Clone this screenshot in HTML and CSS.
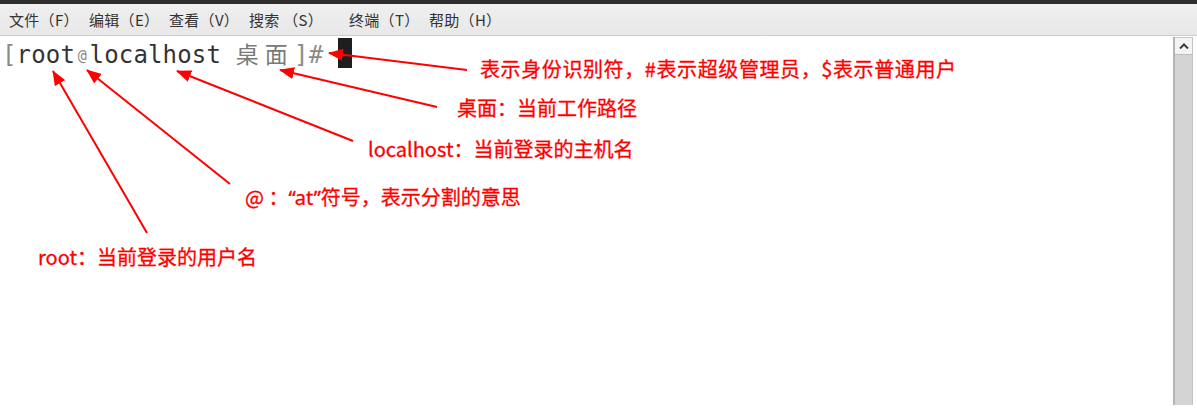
FILE: index.html
```html
<!DOCTYPE html>
<html lang="zh-CN">
<head>
  <meta charset="UTF-8" />
  <title>终端 - root@localhost</title>
  <link rel="stylesheet" href="styles.css">
</head>
<body>
  <div class="topbar"></div>

  <!-- menu -->
  <div class="menubar">
    <span class="menu-item">文件（F）</span>
    <span class="menu-item">编辑（E）</span>
    <span class="menu-item">查看（V）</span>
    <span class="menu-item wide">搜索 （S）</span>
    <span class="menu-item">终端（T）</span>
    <span class="menu-item">帮助（H）</span>
  </div>

  <div class="terminal">
    <div class="screen">
      <div class="prompt"><span class="dim">[</span><span class="strong">root</span><span class="at">@</span><span class="strong">localhost</span> <span class="cjk">桌面</span><span class="dim">]#</span> <span class="cursor"></span></div>
    </div>
    <div class="scrollbar">
      <div class="scroll-btn">
        <svg width="10" height="6" viewBox="0 0 10 6"><path d="M1 5.5 L5 1.5 L9 5.5" fill="none" stroke="#3c3c3c" stroke-width="2"/></svg>
      </div>
      <div class="scroll-trough"></div>
    </div>
  </div>

  <!-- annotations drawn over the screenshot -->
  <div class="notes">
    <svg class="arrows" width="1197" height="416" viewBox="0 0 1197 416">
      <defs>
        <marker id="head" markerUnits="userSpaceOnUse" markerWidth="16" markerHeight="12" refX="14" refY="6" orient="auto">
          <path d="M0 0 L15 6 L0 12 Z" fill="#f00"/>
        </marker>
      </defs>
      <g stroke="#f00" stroke-width="2" marker-end="url(#head)">
        <line x1="467" y1="70" x2="329" y2="53"/>
        <line x1="437" y1="107" x2="280" y2="70"/>
        <line x1="353" y1="141" x2="177" y2="71"/>
        <line x1="230" y1="184" x2="87" y2="70"/>
        <line x1="147" y1="233" x2="53" y2="71"/>
      </g>
    </svg>
    <div class="note n1">表示身份识别符，#表示超级管理员，$表示普通用户</div>
    <div class="note n2">桌面：当前工作路径</div>
    <div class="note n3">localhost：当前登录的主机名</div>
    <div class="note n4">@ ：<span class="latin">“at”</span>符号，表示分割的意思</div>
    <div class="note n5">root：当前登录的用户名</div>
  </div>
</body>
</html>
```

FILE: styles.css
```css
/* ===== Base ===== */
* {
  margin: 0;
  padding: 0;
  box-sizing: border-box;
}
html, body {
  width: 1197px;
  height: 416px;
  overflow: hidden;
  background: #fff;
  font-family: "Noto Sans CJK SC", "Noto Sans", sans-serif;
}
body {
  position: relative;
}

/* ===== Window chrome ===== */
.topbar {
  height: 4px;
  background: #2e2e2e;
}
.menubar {
  display: flex;
  align-items: center;
  height: 32px;
  padding-left: 9px;
  background: linear-gradient(#efefef, #e8e8e8);
  border-bottom: 1px solid #cdcdcd;
  font-size: 15px;
  color: #333;
}
.menu-item {
  width: 80px;
  white-space: nowrap;
  letter-spacing: 0.3px;
}
.menu-item.wide {
  width: 100px;
}

/* ===== Terminal ===== */
.terminal {
  display: flex;
  height: 380px;
}
.screen {
  flex: 1;
  padding: 2px 0 0 2px;
}
.prompt {
  height: 30px;
  line-height: 30px;
  font-family: "DejaVu Sans Mono", "Noto Sans CJK SC", monospace;
  font-size: 24px;
  letter-spacing: 0.15px;
  color: #333;
  white-space: pre;
}
.prompt .dim {
  color: #8a8a8a;
}
.prompt .at {
  display: inline-block;
  width: 14.6px;
  text-align: center;
  font-size: 15px;
  color: #8a8a8a;
  vertical-align: top;
  padding-top: 3px;
}
.prompt .cjk {
  font-family: "Noto Sans CJK SC", sans-serif;
  font-size: 23px;
  letter-spacing: 6.2px;
  color: #7a7a7a;
}
.cursor {
  display: inline-block;
  width: 14px;
  height: 30px;
  background: #1e1e1e;
  vertical-align: top;
}

/* ===== Scrollbar ===== */
.scrollbar {
  display: flex;
  flex-direction: column;
  width: 20px;
  margin: 1px 4px 11px 0;
  background: #d4d4d4;
  border-left: 2px solid #b4b4b4;
  border-right: 1px solid #c4c4c4;
}
.scroll-btn {
  display: flex;
  align-items: center;
  justify-content: center;
  height: 18px;
  background: #f4f4f4;
  border-top: 1px solid #c8c8c8;
  border-bottom: 1px solid #bdbdbd;
}
.scroll-trough {
  flex: 1;
}

/* ===== Annotations ===== */
.notes {
  position: absolute;
  top: 0;
  left: 0;
  width: 1197px;
  height: 416px;
  pointer-events: none;
}
.arrows {
  position: absolute;
  top: 0;
  left: 0;
}
.note {
  position: absolute;
  font-size: 20px;
  line-height: 20px;
  color: #f00;
  white-space: nowrap;
  -webkit-text-stroke: 0.3px #f00;
}
.note .latin {
  font-family: "Noto Sans", sans-serif;
}
.n1 { left: 480px; top: 59px; letter-spacing: 0.6px; }
.n2 { left: 457px; top: 98px; }
.n3 { left: 368px; top: 139px; }
.n4 { left: 245px; top: 187px; }
.n5 { left: 38px; top: 247px; }
```
